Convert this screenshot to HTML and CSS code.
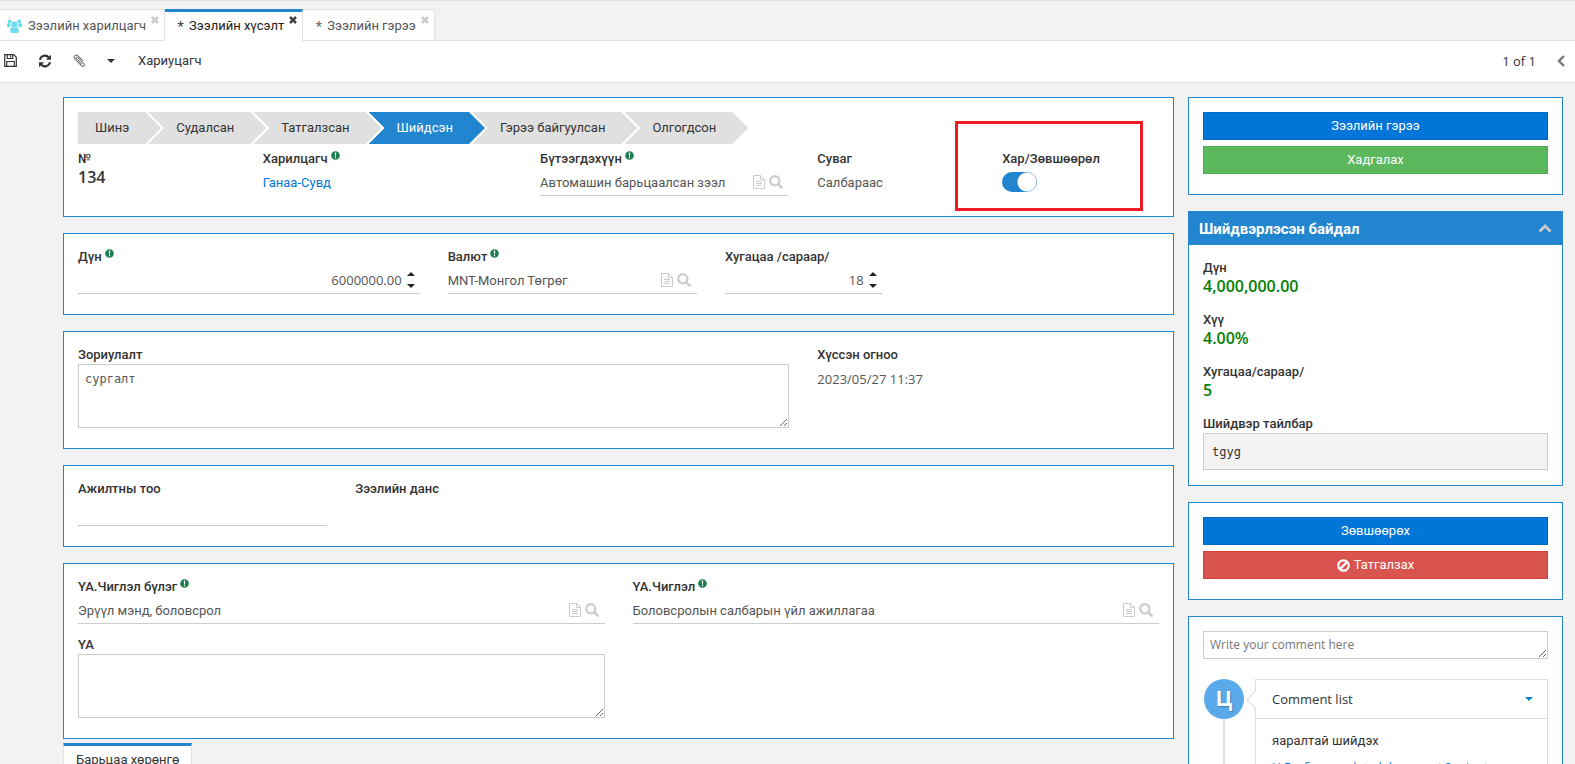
FILE: index.html
```html
<!DOCTYPE html>
<html lang="mn">
<head>
    <meta charset="UTF-8">
    <meta name="viewport" content="width=device-width, initial-scale=1.0">
    <title>Зээлийн хүсэлт</title>
    <link rel="stylesheet" href="styles.css">
</head>
<body>

    <!-- Shared icons -->
    <svg class="sprite" aria-hidden="true">
        <symbol id="i-doc" viewBox="0 0 12 14">
            <path d="M.5.5h7l4 4v9H.5zM7.5.5v4h4M3 6.5h6M3 8.5h6M3 10.5h6" fill="none" stroke="currentColor"/>
        </symbol>
        <symbol id="i-search" viewBox="0 0 14 14">
            <circle cx="5.8" cy="5.8" r="4.6" fill="none" stroke="currentColor" stroke-width="2.2"/>
            <path d="M9.2 9.2l3.4 3.4" stroke="currentColor" stroke-width="2.6" stroke-linecap="round"/>
        </symbol>
        <symbol id="i-req" viewBox="0 0 10 10">
            <circle cx="5" cy="5" r="4.8" fill="currentColor"/>
            <path d="M4.200 1.800h1.600L5.500 6h-1zM4.300 6.800h1.400v1.300H4.300z" fill="#fff"/>
        </symbol>
        <symbol id="i-close" viewBox="0 0 8 8">
            <path d="M1 1l6 6M7 1L1 7" stroke="currentColor" stroke-width="2.6"/>
        </symbol>
    </svg>

    <!-- Tabs -->
    <nav class="tabs">
        <div class="tab">
            <a href="#">
                <svg class="users" viewBox="0 0 30 28" aria-hidden="true">
                    <g fill="#6fd9ee">
                        <circle cx="15" cy="11" r="6"/>
                        <circle cx="5.500" cy="5" r="4"/>
                        <circle cx="24.500" cy="5" r="4"/>
                        <path d="M6.500 24c0-5 1.500-8 4-8 1 1 3 2 4.500 2s3.500-1 4.500-2c2.500 0 4 3 4 8 0 2.500-1.500 4-4 4h-9c-2.500 0-4-1.500-4-4z"/>
                        <path d="M0 13c0-3 1-5 2.500-5 1 1 2 1.500 3 1.500L7.500 9c-.5 2 0 4 1 5.500C6 14.500 5 15.500 4 17H2.500C1 17 0 16 0 13zM30 13c0-3-1-5-2.500-5-1 1-2 1.500-3 1.500L22.500 9c.5 2 0 4-1 5.500 2.500 0 3.500 1 4.500 2.500h1.500c1.500 0 2.500-1 2.500-4z"/>
                    </g>
                </svg>
                Зээлийн харилцагч
            </a>
            <button class="close" aria-label="Хаах"><svg><use href="#i-close"/></svg></button>
        </div>
        <div class="tab active">
            <a href="#"><span class="star">*</span>Зээлийн хүсэлт</a>
            <button class="close" aria-label="Хаах"><svg><use href="#i-close"/></svg></button>
        </div>
        <div class="tab">
            <a href="#"><span class="star">*</span>Зээлийн гэрээ</a>
            <button class="close" aria-label="Хаах"><svg><use href="#i-close"/></svg></button>
        </div>
    </nav>

    <!-- Toolbar -->
    <header class="toolbar">
        <button aria-label="Хадгалах">
            <svg width="13" height="13" viewBox="0 0 13 13"><path d="M.7.7h9l2.600 2.600v9H.7zM3.200.7v3.800h5.500V.7M2.700 12.300V7.500h7.600v4.800M6.500 1.500v2" fill="none" stroke="currentColor" stroke-width="1.200"/></svg>
        </button>
        <button aria-label="Сэргээх">
            <svg width="14" height="14" viewBox="0 0 14 14"><path d="M2 5.800A5 5 0 0 1 10.800 3.500M12 8.200A5 5 0 0 1 3.200 10.500" fill="none" stroke="currentColor" stroke-width="2"/><path d="M13 .8v5H8zM1 13.200v-5h5z" fill="currentColor"/></svg>
        </button>
        <button aria-label="Хавсралт">
            <svg width="13" height="13" viewBox="0 0 14 14"><path d="M9.800 11.200L3.600 5C2.800 4.200 4.200 2.800 5 3.600l6.600 6.600c2 2-.8 4.200-2.300 2.700L2.200 5.800C-.6 2.900 3-.6 5.800 2.200l5 5" fill="none" stroke="currentColor"/></svg>
        </button>
        <button aria-label="Цэс">
            <svg width="8" height="4" viewBox="0 0 8 4"><path d="M0 0h8L4 4z" fill="currentColor"/></svg>
        </button>
        <button class="assign">Хариуцагч</button>
        <span class="pager">1 of 1</span>
        <button class="prev" aria-label="Өмнөх">
            <svg width="8" height="12" viewBox="0 0 8 12"><path d="M7 1L2 6l5 5" fill="none" stroke="currentColor" stroke-width="2.400"/></svg>
        </button>
    </header>

    <main class="page">
        <form class="main-col">

            <section class="card">
                <ol class="steps">
                    <li>Шинэ</li>
                    <li>Судалсан</li>
                    <li>Татгалзсан</li>
                    <li class="current">Шийдсэн</li>
                    <li>Гэрээ байгуулсан</li>
                    <li>Олгогдсон</li>
                </ol>
                <div class="grid">
                    <div class="field w2">
                        <span class="label">№</span>
                        <span class="big">134</span>
                    </div>
                    <div class="field w3">
                        <span class="label">Харилцагч<svg class="req"><use href="#i-req"/></svg></span>
                        <a class="value" href="#">Ганаа-Сувд</a>
                    </div>
                    <div class="field w3">
                        <label class="label" for="product">Бүтээгдэхүүн<svg class="req"><use href="#i-req"/></svg></label>
                        <div class="control">
                            <input type="text" id="product" value="Автомашин барьцаалсан зээл">
                            <button type="button" aria-label="Нээх"><svg class="doc"><use href="#i-doc"/></svg></button>
                            <button type="button" aria-label="Хайх"><svg class="search"><use href="#i-search"/></svg></button>
                        </div>
                    </div>
                    <div class="field w2">
                        <span class="label">Суваг</span>
                        <span class="value">Салбараас</span>
                    </div>
                    <div class="field w2 marked">
                        <label class="label" for="approve">Хар/Зөвшөөрөл</label>
                        <input class="switch" type="checkbox" id="approve" checked>
                    </div>
                </div>
            </section>

            <section class="card">
                <div class="grid">
                    <div class="field w4">
                        <label class="label" for="amount">Дүн<svg class="req"><use href="#i-req"/></svg></label>
                        <div class="control number">
                            <input type="text" id="amount" value="6000000.00">
                            <div class="spin">
                                <button type="button" class="up" aria-label="Нэмэх"></button>
                                <button type="button" class="down" aria-label="Хасах"></button>
                            </div>
                        </div>
                    </div>
                    <div class="field w3">
                        <label class="label" for="currency">Валют<svg class="req"><use href="#i-req"/></svg></label>
                        <div class="control">
                            <input type="text" id="currency" value="MNT-Монгол Төгрөг">
                            <button type="button" aria-label="Нээх"><svg class="doc"><use href="#i-doc"/></svg></button>
                            <button type="button" aria-label="Хайх"><svg class="search"><use href="#i-search"/></svg></button>
                        </div>
                    </div>
                    <div class="field w2">
                        <label class="label" for="months">Хугацаа /сараар/</label>
                        <div class="control number">
                            <input type="text" id="months" value="18">
                            <div class="spin">
                                <button type="button" class="up" aria-label="Нэмэх"></button>
                                <button type="button" class="down" aria-label="Хасах"></button>
                            </div>
                        </div>
                    </div>
                </div>
            </section>

            <section class="card">
                <div class="grid">
                    <div class="field w8">
                        <label class="label" for="purpose">Зориулалт</label>
                        <textarea id="purpose">сургалт</textarea>
                    </div>
                    <div class="field w3">
                        <span class="label">Хүссэн огноо</span>
                        <span class="value latin">2023/05/27 11:37</span>
                    </div>
                </div>
            </section>

            <section class="card">
                <div class="grid">
                    <div class="field w3">
                        <label class="label" for="staff">Ажилтны тоо</label>
                        <div class="control"><input type="text" id="staff"></div>
                    </div>
                    <div class="field w3">
                        <span class="label">Зээлийн данс</span>
                    </div>
                </div>
            </section>

            <section class="card">
                <div class="grid">
                    <div class="field w6">
                        <label class="label" for="group">ҮА.Чиглэл бүлэг<svg class="req"><use href="#i-req"/></svg></label>
                        <div class="control">
                            <input type="text" id="group" value="Эрүүл мэнд, боловсрол">
                            <button type="button" aria-label="Нээх"><svg class="doc"><use href="#i-doc"/></svg></button>
                            <button type="button" aria-label="Хайх"><svg class="search"><use href="#i-search"/></svg></button>
                        </div>
                    </div>
                    <div class="field w6">
                        <label class="label" for="sector">ҮА.Чиглэл<svg class="req"><use href="#i-req"/></svg></label>
                        <div class="control">
                            <input type="text" id="sector" value="Боловсролын салбарын үйл ажиллагаа">
                            <button type="button" aria-label="Нээх"><svg class="doc"><use href="#i-doc"/></svg></button>
                            <button type="button" aria-label="Хайх"><svg class="search"><use href="#i-search"/></svg></button>
                        </div>
                    </div>
                    <div class="field w6">
                        <label class="label" for="activity">ҮА</label>
                        <textarea id="activity"></textarea>
                    </div>
                </div>
            </section>

            <div class="subtabs">
                <a class="subtab" href="#">Барьцаа хөрөнгө</a>
            </div>
        </form>

        <aside class="side-col">

            <section class="card actions">
                <button class="btn primary">Зээлийн гэрээ</button>
                <button class="btn success">Хадгалах</button>
            </section>

            <section class="panel">
                <header class="panel-head">
                    <h2>Шийдвэрлэсэн байдал</h2>
                    <button aria-label="Хураах">
                        <svg width="14" height="9" viewBox="0 0 14 9"><path d="M1.500 7.500L7 2l5.500 5.500" fill="none" stroke="currentColor" stroke-width="2.800"/></svg>
                    </button>
                </header>
                <div class="panel-body">
                    <div class="field">
                        <span class="label">Дүн</span>
                        <span class="big green">4,000,000.00</span>
                    </div>
                    <div class="field">
                        <span class="label">Хүү</span>
                        <span class="big green">4.00%</span>
                    </div>
                    <div class="field">
                        <span class="label">Хугацаа/сараар/</span>
                        <span class="big green">5</span>
                    </div>
                    <div class="field">
                        <label class="label" for="note">Шийдвэр тайлбар</label>
                        <textarea class="note" id="note" readonly>tgyg</textarea>
                    </div>
                </div>
            </section>

            <section class="card actions">
                <button class="btn primary">Зөвшөөрөх</button>
                <button class="btn danger">
                    <svg width="13" height="13" viewBox="0 0 13 13" aria-hidden="true"><g fill="none" stroke="#fff" stroke-width="2.200"><circle cx="6.500" cy="6.500" r="5.200"/><path d="M2.900 10.100l7.200-7.200"/></g></svg>
                    Татгалзах
                </button>
            </section>

            <section class="card comments">
                <textarea class="write" placeholder="Write your comment here" aria-label="Comment"></textarea>
                <div class="thread">
                    <div class="avatar">Ц</div>
                    <div class="bubble">
                        <div class="bubble-head">
                            Comment list
                            <button aria-label="Toggle"><svg width="8" height="4" viewBox="0 0 8 4"><path d="M0 0h8L4 4z" fill="currentColor"/></svg></button>
                        </div>
                        <div class="bubble-body">
                            <p>яаралтай шийдэх</p>
                            <a href="#">Ц.Гэрбаяр updated document 2 minutes ago</a>
                        </div>
                    </div>
                </div>
            </section>
        </aside>
    </main>

</body>
</html>
```
FILE: styles.css
```css
* {
    box-sizing: border-box;
}
body {
    margin: 0;
    height: 100vh;
    overflow: hidden;
    background-color: #f2f2f2;
    border-top: 1px solid #e2e2e2;
    font-family: Roboto, "Open Sans", sans-serif;
    font-size: 13px;
    line-height: 18px;
    color: #333;
}
a {
    color: #0275d8;
    text-decoration: none;
}
button {
    display: flex;
    align-items: center;
    justify-content: center;
    padding: 0;
    border: none;
    background: none;
    font: inherit;
    color: inherit;
    cursor: pointer;
}
.sprite {
    display: none;
}

/* Tabs */
.tabs {
    display: flex;
    padding-top: 8px;
    border-bottom: 1px solid #e2e2e2;
}
.tab {
    display: flex;
    align-items: flex-start;
    height: 31px;
    padding: 0 5px 0 7px;
    background-color: #fff;
    border-top: 1px solid #e2e2e2;
    border-right: 1px solid #e2e2e2;
}
.tab a {
    display: flex;
    align-items: center;
    height: 31px;
    color: #555;
}
.tab + .tab {
    padding-left: 12px;
}
.tab.active {
    height: 32px;
    margin-bottom: -1px;
    border-top: 3px solid #2185d0;
}
.tab.active a {
    height: 27px;
    color: #222;
}
.users {
    width: 15px;
    height: 14px;
    margin-right: 6px;
}
.star {
    width: 12px;
    font-family: "Open Sans", sans-serif;
}
.close {
    margin: 6px 0 0 5px;
    color: #ccc;
}
.close svg {
    width: 8px;
    height: 8px;
}
.active .close {
    margin-top: 4px;
    color: #444;
}

/* Toolbar */
.toolbar {
    display: flex;
    align-items: center;
    height: 42px;
    padding: 0 10px 2px 4px;
    background-color: #fff;
    border-bottom: 1px solid #e2e2e2;
    gap: 21px;
}
.assign {
    margin-left: 2px;
}
.pager {
    margin-left: auto;
    font-family: "Open Sans", sans-serif;
}
.prev {
    color: #777;
}

/* Page columns */
.page {
    display: grid;
    grid-template-columns: minmax(0, 1fr) 375px;
    gap: 14px;
    align-items: start;
    padding: 14px 12px 0 63px;
}
.main-col, .side-col {
    display: flex;
    flex-direction: column;
    gap: 16px;
}
.card {
    padding: 14px 14px 20px;
    background-color: #fff;
    border: 1px solid #2185d0;
}
.grid {
    display: grid;
    grid-template-columns: repeat(12, minmax(0, 1fr));
    gap: 12px 28px;
}
.w2 { grid-column: span 2; }
.w3 { grid-column: span 3; }
.w4 { grid-column: span 4; }
.w6 { grid-column: span 6; }
.w8 { grid-column: span 8; }

/* Status steps */
.steps {
    display: flex;
    margin: 0 0 6px;
    padding: 0;
    list-style: none;
}
.steps li {
    padding: 0 32px 0 28px;
    margin-left: -13px;
    line-height: 32px;
    background-color: #e0e0e0;
    clip-path: polygon(0 0, calc(100% - 16px) 0, 100% 50%, calc(100% - 16px) 100%, 0 100%, 16px 50%);
}
.steps li:first-child {
    margin-left: 0;
    padding-left: 17px;
    clip-path: polygon(0 0, calc(100% - 16px) 0, 100% 50%, calc(100% - 16px) 100%, 0 100%);
}
.steps .current {
    background-color: #2185d0;
    color: #fff;
}

/* Fields */
.field {
    display: flex;
    flex-direction: column;
    align-items: stretch;
}
.label {
    font-size: 13px;
    font-weight: 500;
    white-space: nowrap;
}
.req {
    width: 9px;
    height: 9px;
    margin-left: 3px;
    vertical-align: 3px;
    color: #1b7f4f;
}
.value {
    padding-top: 2px;
    line-height: 26px;
}
span.value {
    color: #555;
}
.latin {
    font-family: "Open Sans", sans-serif;
}
.big {
    font-family: "Open Sans", sans-serif;
    font-size: 16px;
    font-weight: 600;
    line-height: 18px;
    padding-bottom: 2px;
}
.green {
    color: #008000;
}
.control {
    display: flex;
    align-items: center;
    height: 28px;
    border-bottom: 1px solid #ccc;
    color: #ccc;
}
.control > button:last-child {
    margin: 0 6px 0 4px;
}
.control input {
    flex: 1;
    min-width: 0;
    padding: 2px 0 0;
    border: none;
    outline: none;
    background: none;
    font: inherit;
    color: #555;
}
.doc {
    width: 12px;
    height: 14px;
}
.search {
    width: 14px;
    height: 14px;
}
.control.number input {
    padding-top: 0;
    font-family: "Open Sans", sans-serif;
    text-align: right;
}
.spin {
    display: flex;
    flex-direction: column;
    gap: 8px;
    margin: 0 5px;
}
.spin button {
    border: 4px solid transparent;
}
.spin .up {
    border-top: none;
    border-bottom-color: #222;
}
.spin .down {
    border-bottom: none;
    border-top-color: #222;
}
textarea {
    display: block;
    width: 100%;
    height: 64px;
    padding: 5px 6px;
    border: 1px solid #ccc;
    outline: none;
    background-color: #fff;
    font-family: "DejaVu Sans Mono", monospace;
    font-size: 12px;
    line-height: 18px;
    color: #555;
}
.switch {
    appearance: none;
    width: 35px;
    height: 20px;
    margin: 4px 0 0;
    border-radius: 10px;
    background: radial-gradient(circle at 25px 10px, #fff 9px, #2185d0 10px);
}

/* Highlighted switch */
.marked {
    position: relative;
}
.marked::after {
    content: "";
    box-sizing: border-box;
    position: absolute;
    top: -29px;
    left: -47px;
    width: 188px;
    height: 90px;
    border: 3px solid #ed1c24;
    pointer-events: none;
}

/* Bottom tabs */
.subtabs {
    display: flex;
    margin-top: -12px;
}
.subtab {
    padding: 5px 12px;
    background-color: #fff;
    border: 1px solid #e2e2e2;
    border-top: 3px solid #2185d0;
    color: #333;
}

/* Side column */
.actions {
    display: flex;
    flex-direction: column;
    gap: 6px;
}
.btn {
    gap: 4px;
    height: 28px;
    border: 1px solid;
    color: #fff;
}
.primary {
    background-color: #0275d8;
    border-color: #0267bf;
}
.success {
    background-color: #5cb85c;
    border-color: #4cae4c;
}
.danger {
    background-color: #d9534f;
    border-color: #d43f3a;
}
.panel {
    background-color: #fff;
    border: 1px solid #2185d0;
}
.panel-head {
    display: flex;
    align-items: center;
    justify-content: space-between;
    height: 33px;
    padding: 0 10px;
    background-color: #2185d0;
    color: #fff;
}
.panel-head h2 {
    margin: 0;
    font-size: 15px;
    font-weight: 700;
}
.panel-head button {
    color: #ccc;
}
.panel-body {
    display: flex;
    flex-direction: column;
    gap: 14px;
    padding: 14px 14px 15px;
}
.note {
    height: 37px;
    padding: 9px 8px;
    background-color: #f3f3f3;
    resize: none;
    color: #333;
}
.write {
    height: 28px;
    padding: 4px 6px;
    font-family: "Open Sans", sans-serif;
    font-size: 12px;
}
.write::placeholder {
    color: #777;
}

/* Comment thread */
.thread {
    display: grid;
    grid-template-columns: 40px minmax(0, 1fr);
    gap: 11px;
    margin-top: 20px;
    padding-left: 1px;
    font-family: "Open Sans", sans-serif;
    background: linear-gradient(#ddd, #ddd) 20px 0 / 2px 100% no-repeat;
}
.avatar {
    height: 40px;
    border-radius: 50%;
    background-color: #5aaaeb;
    color: #fff;
    font: bold 22px/40px "Liberation Sans", sans-serif;
    text-align: center;
    text-shadow: 1px 1px 1px #3c7fb5;
}
.bubble {
    position: relative;
    border: 1px solid #ddd;
}
.bubble::before {
    content: "";
    position: absolute;
    top: 13px;
    left: -7px;
    width: 12px;
    height: 12px;
    border: 1px solid #ddd;
    border-top: none;
    border-right: none;
    background-color: #fff;
    transform: rotate(45deg);
}
.bubble-head {
    display: flex;
    align-items: center;
    justify-content: space-between;
    height: 39px;
    padding: 0 14px 0 16px;
    border-bottom: 1px solid #ddd;
}
.bubble-head button {
    color: #0088cc;
}
.bubble-body {
    padding: 13px 16px;
}
.bubble-body p {
    margin: 0 0 8px;
    font-family: Roboto, sans-serif;
}
.bubble-body a {
    font-size: 12px;
}
```
